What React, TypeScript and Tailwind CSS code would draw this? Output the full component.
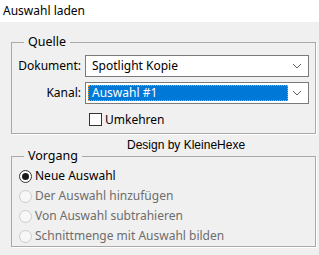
import React from 'react';

const font = { fontFamily: '"Noto Sans", "Open Sans", sans-serif' };

const Chevron: React.FC = () => (
  <svg width="10" height="6" viewBox="0 0 10 6" className="shrink-0">
    <path d="M1 1 L5 5 L9 1" fill="none" stroke="#606060" strokeWidth="1" />
  </svg>
);

const Radio: React.FC<{ label: string; checked?: boolean; disabled?: boolean }> = ({ label, checked, disabled }) => (
  <div className="flex items-center h-[20px] gap-[3px]">
    <span
      className={
        checked
          ? 'w-[13px] h-[13px] rounded-full border border-[#333333] bg-white flex items-center justify-center'
          : 'w-[13px] h-[13px] rounded-full border border-[#cccccc] bg-[#f7f7f7]'
      }
    >
      {checked && <span className="w-[7px] h-[7px] rounded-full bg-[#1a1a1a]" />}
    </span>
    <span className={disabled ? 'text-[#6d6d6d]' : 'text-black'}>{label}</span>
  </div>
);

export default function App() {
  return (
    <div className="w-[319px] h-[255px] flex flex-col bg-[#f0f0f0] text-[12px] leading-none" style={font}>
      <div className="h-[22px] bg-white flex items-center px-[3px] text-[12px] text-black">Auswahl laden</div>

      <div className="flex-1 flex flex-col pl-[11px] pr-[3px] pt-[20px]">
        {/* Quelle */}
        <div className="relative h-[92px] border border-[#a9a9a9] shadow-[1px_1px_0_#ffffff] pt-[12px] pr-[6px]">
          <span className="absolute -top-[9px] left-[12px] bg-[#f0f0f0] px-[4px] text-[12.5px] leading-[16px]">Quelle</span>

          <div className="flex items-center gap-[4px]">
            <span className="w-[69px] text-right">Dokument:</span>
            <div className="flex-1 h-[22px] bg-white border border-[#7a7a7a] flex items-center pl-[6px] pr-[6px]">
              <span className="flex-1">Spotlight Kopie</span>
              <Chevron />
            </div>
          </div>

          <div className="flex items-center gap-[4px] mt-[5px]">
            <span className="w-[69px] text-right">Kanal:</span>
            <div className="flex-1 h-[22px] bg-white border border-[#7a7a7a] flex items-center pl-[2px] pr-[6px]">
              <span className="w-[200px] h-[16px] bg-[#0078d7] border border-dotted border-[#f59a23] flex items-center pl-[3px] text-white">
                Auswahl #1
              </span>
              <span className="flex-1" />
              <Chevron />
            </div>
          </div>

          <div className="flex items-center gap-[3px] mt-[9px] pl-[77px]">
            <span className="w-[13px] h-[13px] border border-[#333333] bg-white" />
            <span>Umkehren</span>
          </div>
        </div>

        <div className="h-[22px] flex items-center pl-[116px] text-[12px]" style={{ fontFamily: '"Liberation Sans", Arial, sans-serif' }}>
          Design by KleineHexe
        </div>

        {/* Vorgang */}
        <div className="relative h-[91px] border border-[#a9a9a9] shadow-[1px_1px_0_#ffffff] pt-[9px] pl-[7px]">
          <span className="absolute -top-[9px] left-[12px] bg-[#f0f0f0] px-[4px] text-[12.5px] leading-[16px]">Vorgang</span>
          <Radio label="Neue Auswahl" checked />
          <Radio label="Der Auswahl hinzufügen" disabled />
          <Radio label="Von Auswahl subtrahieren" disabled />
          <Radio label="Schnittmenge mit Auswahl bilden" disabled />
        </div>
      </div>
    </div>
  );
}
